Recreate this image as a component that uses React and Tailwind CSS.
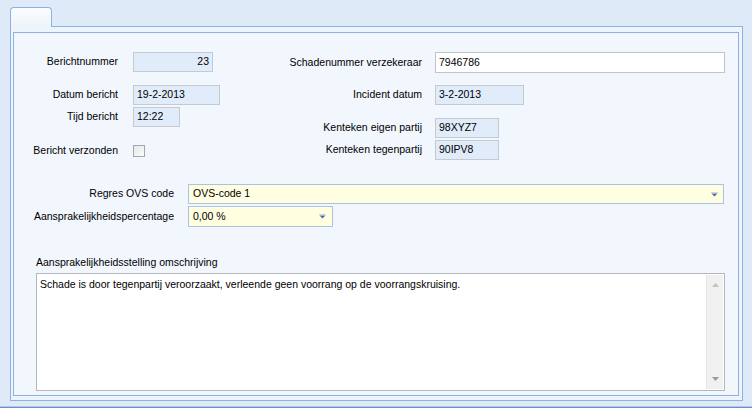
import React from 'react';

const font = { fontFamily: '"Liberation Sans", Arial, sans-serif' };

const ReadField = ({ value, w, right }) => (
  <div
    className={`h-[20px] ${w} border border-[#c5cad0] bg-[#e1ecfb] px-[3px] flex items-center text-[10.5px] text-black ${right ? 'justify-end' : ''}`}
  >
    {value}
  </div>
);

const DropArrow = () => (
  <svg width="7" height="5" viewBox="0 0 7 5" className="shrink-0">
    <path d="M0 0h7" stroke="#9fb2d3" strokeWidth="1" />
    <path d="M0.5 1.5h6L3.5 4.5z" fill="#4f6a9e" />
  </svg>
);

const LeftRow = ({ label, children, className = '' }) => (
  <div className={`flex items-center ${className}`}>
    <div className="w-[104px] text-right text-[10.5px] text-black">{label}</div>
    <div className="ml-[15px]">{children}</div>
  </div>
);

const RightRow = ({ label, children, className = '' }) => (
  <div className={`flex items-center ${className}`}>
    <div className="w-[152px] text-right text-[10.5px] text-black">{label}</div>
    <div className="ml-[13px]">{children}</div>
  </div>
);

export default function App() {
  return (
    <div className="w-[752px] h-[408px] bg-[#dfeaf9] flex flex-col overflow-hidden" style={font}>
      {/* tab strip */}
      <div className="h-[26px] pl-[10px] pt-[7px] flex items-start">
        <div className="relative z-10 w-[42px] h-[20px] rounded-t-[4px] border border-b-0 border-[#8db1e2] bg-gradient-to-b from-[#fbfdff] to-[#eef4fc]" />
      </div>

      {/* outer panel */}
      <div className="ml-[10px] w-[733px] h-[375px] border border-[#8db1e2] bg-[#eef4fc] pt-[5px] pl-[2px] pr-[3px]">
        <div className="w-[726px] h-[364px] border border-[#8db1e2] bg-[#f2f6fd] flex flex-col">
          <div className="flex pt-[19px]">
            {/* left column */}
            <div className="w-[256px] flex flex-col">
              <LeftRow label="Berichtnummer">
                <ReadField value="23" w="w-[80px]" right />
              </LeftRow>
              <LeftRow label="Datum bericht" className="mt-[13px]">
                <ReadField value="19-2-2013" w="w-[87px]" />
              </LeftRow>
              <LeftRow label="Tijd bericht" className="mt-[2px]">
                <ReadField value="12:22" w="w-[47px]" />
              </LeftRow>
              <LeftRow label="Bericht verzonden" className="mt-[14px] h-[20px]">
                <div className="w-[12px] h-[12px] border border-[#a2a8b0] bg-gradient-to-br from-[#e6e8eb] to-[#fbfbfb]" />
              </LeftRow>
            </div>
            {/* right column */}
            <div className="flex flex-col">
              <RightRow label="Schadenummer verzekeraar">
                <div className="h-[21px] w-[290px] border border-[#c0c5cb] bg-white px-[3px] flex items-center text-[10.5px] text-black">
                  7946786
                </div>
              </RightRow>
              <RightRow label="Incident datum" className="mt-[12px]">
                <ReadField value="3-2-2013" w="w-[89px]" />
              </RightRow>
              <RightRow label="Kenteken eigen partij" className="mt-[13px]">
                <ReadField value="98XYZ7" w="w-[64px]" />
              </RightRow>
              <RightRow label="Kenteken tegenpartij" className="mt-[2px]">
                <ReadField value="90IPV8" w="w-[64px]" />
              </RightRow>
            </div>
          </div>

          {/* dropdowns */}
          <div className="mt-[23px] flex flex-col gap-[2px]">
            <div className="flex items-center">
              <div className="w-[160px] text-right text-[10.5px] text-black">Regres OVS code</div>
              <div className="ml-[14px] w-[536px] h-[20px] border border-[#a9c3e6] bg-[#fffee1] pl-[4px] pr-[5px] flex items-center justify-between text-[10.5px] text-black">
                <span>OVS-code 1</span>
                <DropArrow />
              </div>
            </div>
            <div className="flex items-center">
              <div className="w-[160px] text-right text-[10.5px] text-black">Aansprakelijkheidspercentage</div>
              <div className="ml-[14px] w-[145px] h-[21px] border border-[#a9c3e6] bg-[#fffee1] pl-[4px] pr-[6px] flex items-center justify-between text-[10.5px] text-black">
                <span>0,00 %</span>
                <DropArrow />
              </div>
            </div>
          </div>

          {/* description */}
          <div className="ml-[22px] mt-[29px] text-[10.5px] leading-[13px] text-black">
            Aansprakelijkheidsstelling omschrijving
          </div>
          <div className="ml-[22px] mt-[4px] w-[689px] h-[118px] border border-[#b3b8bf] bg-white flex">
            <div className="flex-1 pl-[3px] pt-[4px] text-[10.5px] leading-[13px] text-black">
              Schade is door tegenpartij veroorzaakt, verleende geen voorrang op de voorrangskruising.
            </div>
            <div className="w-[17px] my-[1px] mr-[1px] bg-[#f1f1f1] border-l border-[#e6e6e6] flex flex-col items-center justify-between py-[8px]">
              <svg width="7" height="4" viewBox="0 0 7 4">
                <path d="M0 4h7L3.5 0z" fill="#c2c2c2" />
              </svg>
              <svg width="7" height="4" viewBox="0 0 7 4">
                <path d="M0 0h7L3.5 4z" fill="#9a9a9a" />
              </svg>
            </div>
          </div>
        </div>
      </div>

      {/* bottom edge */}
      <div className="mt-auto h-[1px] bg-[#b3c8ea]" />
      <div className="h-[1px] bg-[#6f8fc4]" />
    </div>
  );
}
